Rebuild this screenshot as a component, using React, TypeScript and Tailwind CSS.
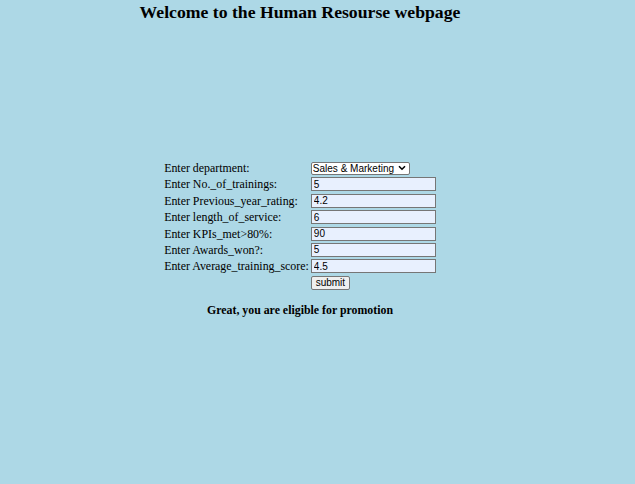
import { useState } from "react";

const fields = [
  { label: "Enter No._of_trainings:", value: "5" },
  { label: "Enter Previous_year_rating:", value: "4.2" },
  { label: "Enter length_of_service:", value: "6" },
  { label: "Enter KPIs_met>80%:", value: "90" },
  { label: "Enter Awards_won?:", value: "5" },
  { label: "Enter Average_training_score:", value: "4.5" },
];

export default function App() {
  const [department, setDepartment] = useState("Sales & Marketing");

  return (
    <div className="min-h-[484px] bg-[#add8e6] text-black font-['Liberation_Serif',serif]">
      <div className="w-[600px] text-center">
        <h2 className="text-[17.7px] font-bold leading-[22px] pt-[1px]">
          Welcome to the Human Resourse webpage
        </h2>

        <div className="mt-[138px] flex justify-center">
          <div className="grid grid-cols-[auto_auto] gap-x-[2px] gap-y-[2.4px] text-left text-[11.9px] leading-[14px]">
            <label className="flex items-center h-[14px]">Enter department:</label>
            <div className="relative flex items-center h-[14px]">
              <select
                value={department}
                onChange={(e) => setDepartment(e.target.value)}
                className="h-[13px] w-[99px] border border-[#767676] rounded-[2px] bg-white text-[10px] leading-[11px] font-['Liberation_Sans',sans-serif] pl-[1px] appearance-none"
              >
                <option>Sales & Marketing</option>
                <option>Operations</option>
                <option>Technology</option>
                <option>Analytics</option>
                <option>R&D</option>
                <option>Procurement</option>
                <option>Finance</option>
                <option>HR</option>
                <option>Legal</option>
              </select>
              <svg
                className="absolute left-[87px] top-[4px] pointer-events-none"
                width="8"
                height="6"
                viewBox="0 0 8 6"
              >
                <path d="M1 1.2 L4 4.2 L7 1.2" fill="none" stroke="#000" strokeWidth="1.6" />
              </svg>
            </div>
            {fields.map((f) => (
              <Row key={f.label} label={f.label} value={f.value} />
            ))}
            <div />
            <div className="h-[14px] flex items-center">
              <button className="h-[14px] w-[39px] border border-[#767676] rounded-[2px] bg-[#efefef] text-[10px] leading-[11px] font-['Liberation_Sans',sans-serif]">
                submit
              </button>
            </div>
          </div>
        </div>

        <p className="mt-[13px] text-[11.85px] font-bold leading-[15px]">
          Great, you are eligible for promotion
        </p>
      </div>
    </div>
  );
}

function Row({ label, value }: { label: string; value: string }) {
  return (
    <>
      <label className="flex items-center h-[14px] whitespace-nowrap">{label}</label>
      <input
        defaultValue={value}
        className="h-[14px] w-[125px] border border-[#767676] bg-[#e8f0fe] px-[2px] text-[10px] leading-[12px] font-['Liberation_Sans',sans-serif] outline-none"
      />
    </>
  );
}
